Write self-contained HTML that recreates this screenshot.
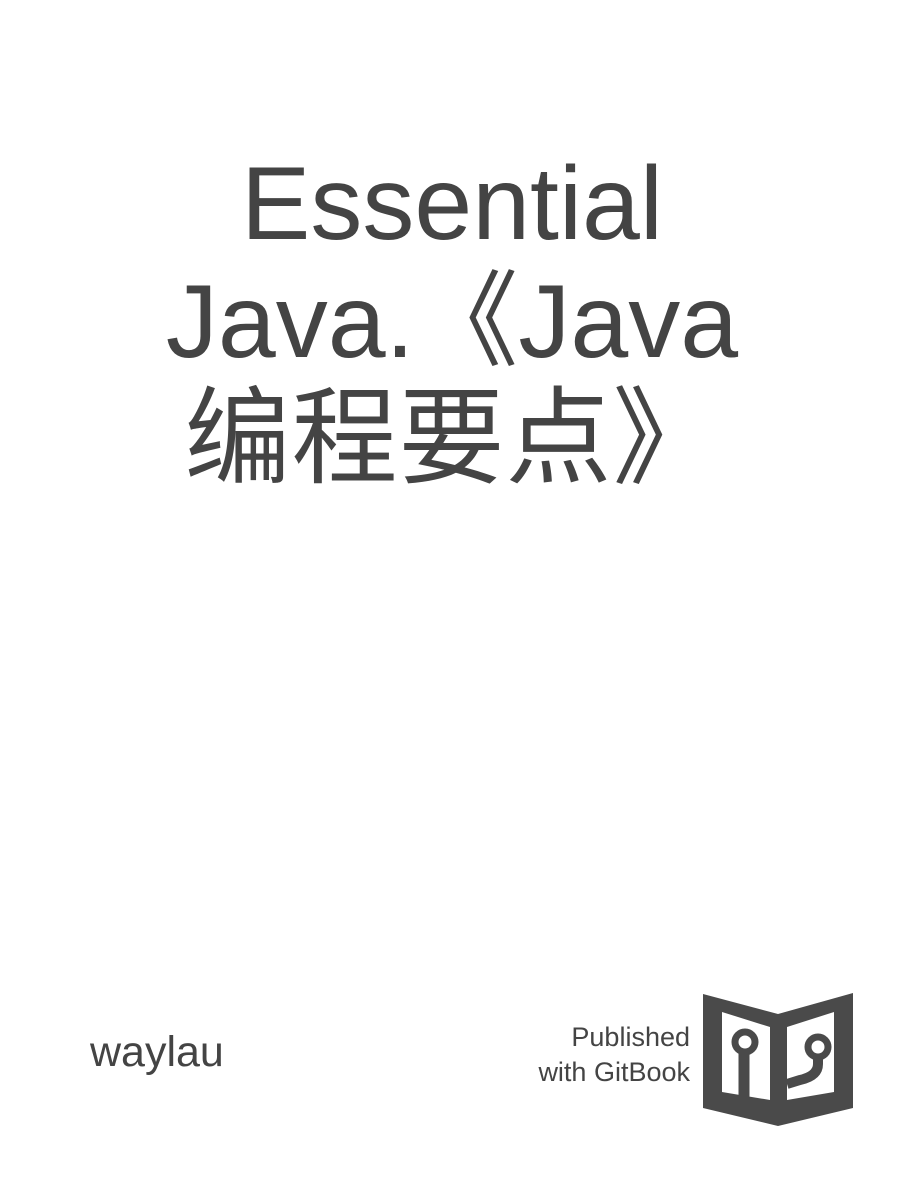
<!DOCTYPE html>
<html><head><meta charset="utf-8"><style>
html,body{margin:0;padding:0;background:#fff;width:904px;height:1186px;overflow:hidden;position:relative}
.t{position:absolute;left:0;width:904px;text-align:center;font-family:"Liberation Sans","Noto Sans CJK SC",sans-serif;font-size:104px;line-height:118px;color:#444;white-space:nowrap}
.s{position:absolute;font-family:"Liberation Sans",sans-serif;color:#444}
</style></head><body>
<div class="t" style="top:145px">Essential</div>
<div class="t" style="top:263px">Java.《Java</div>
<div class="t" style="top:380px;font-size:106px;left:0px;letter-spacing:1px">编程要点》</div>
<div class="s" style="left:90px;top:1028px;font-size:43px;line-height:48px">waylau</div>
<div class="s" style="right:214px;top:1020px;font-size:27px;line-height:35px;text-align:right">Published<br>with GitBook</div>
<svg style="position:absolute;left:0;top:0" width="904" height="1186">
<path d="M703 994 L778 1014 L853 993 L853 1108 L778 1126 L703 1108 Z" fill="#4a4a4a"/>
<path d="M722 1012 L770 1027 L770 1100 L722 1092 Z" fill="#fff"/>
<path d="M787 1027 L834 1012 L834 1092 L787 1100 Z" fill="#fff"/>
<path d="M744 1052 L744 1098" stroke="#4a4a4a" stroke-width="11" fill="none"/>
<circle cx="745" cy="1042" r="10" stroke="#4a4a4a" stroke-width="7" fill="#fff"/>
<path d="M818 1056 L818 1064 Q818 1076 800 1080 L787 1084" stroke="#4a4a4a" stroke-width="10" fill="none"/>
<circle cx="818" cy="1047" r="10" stroke="#4a4a4a" stroke-width="7" fill="#fff"/>
</svg>
</body></html>
